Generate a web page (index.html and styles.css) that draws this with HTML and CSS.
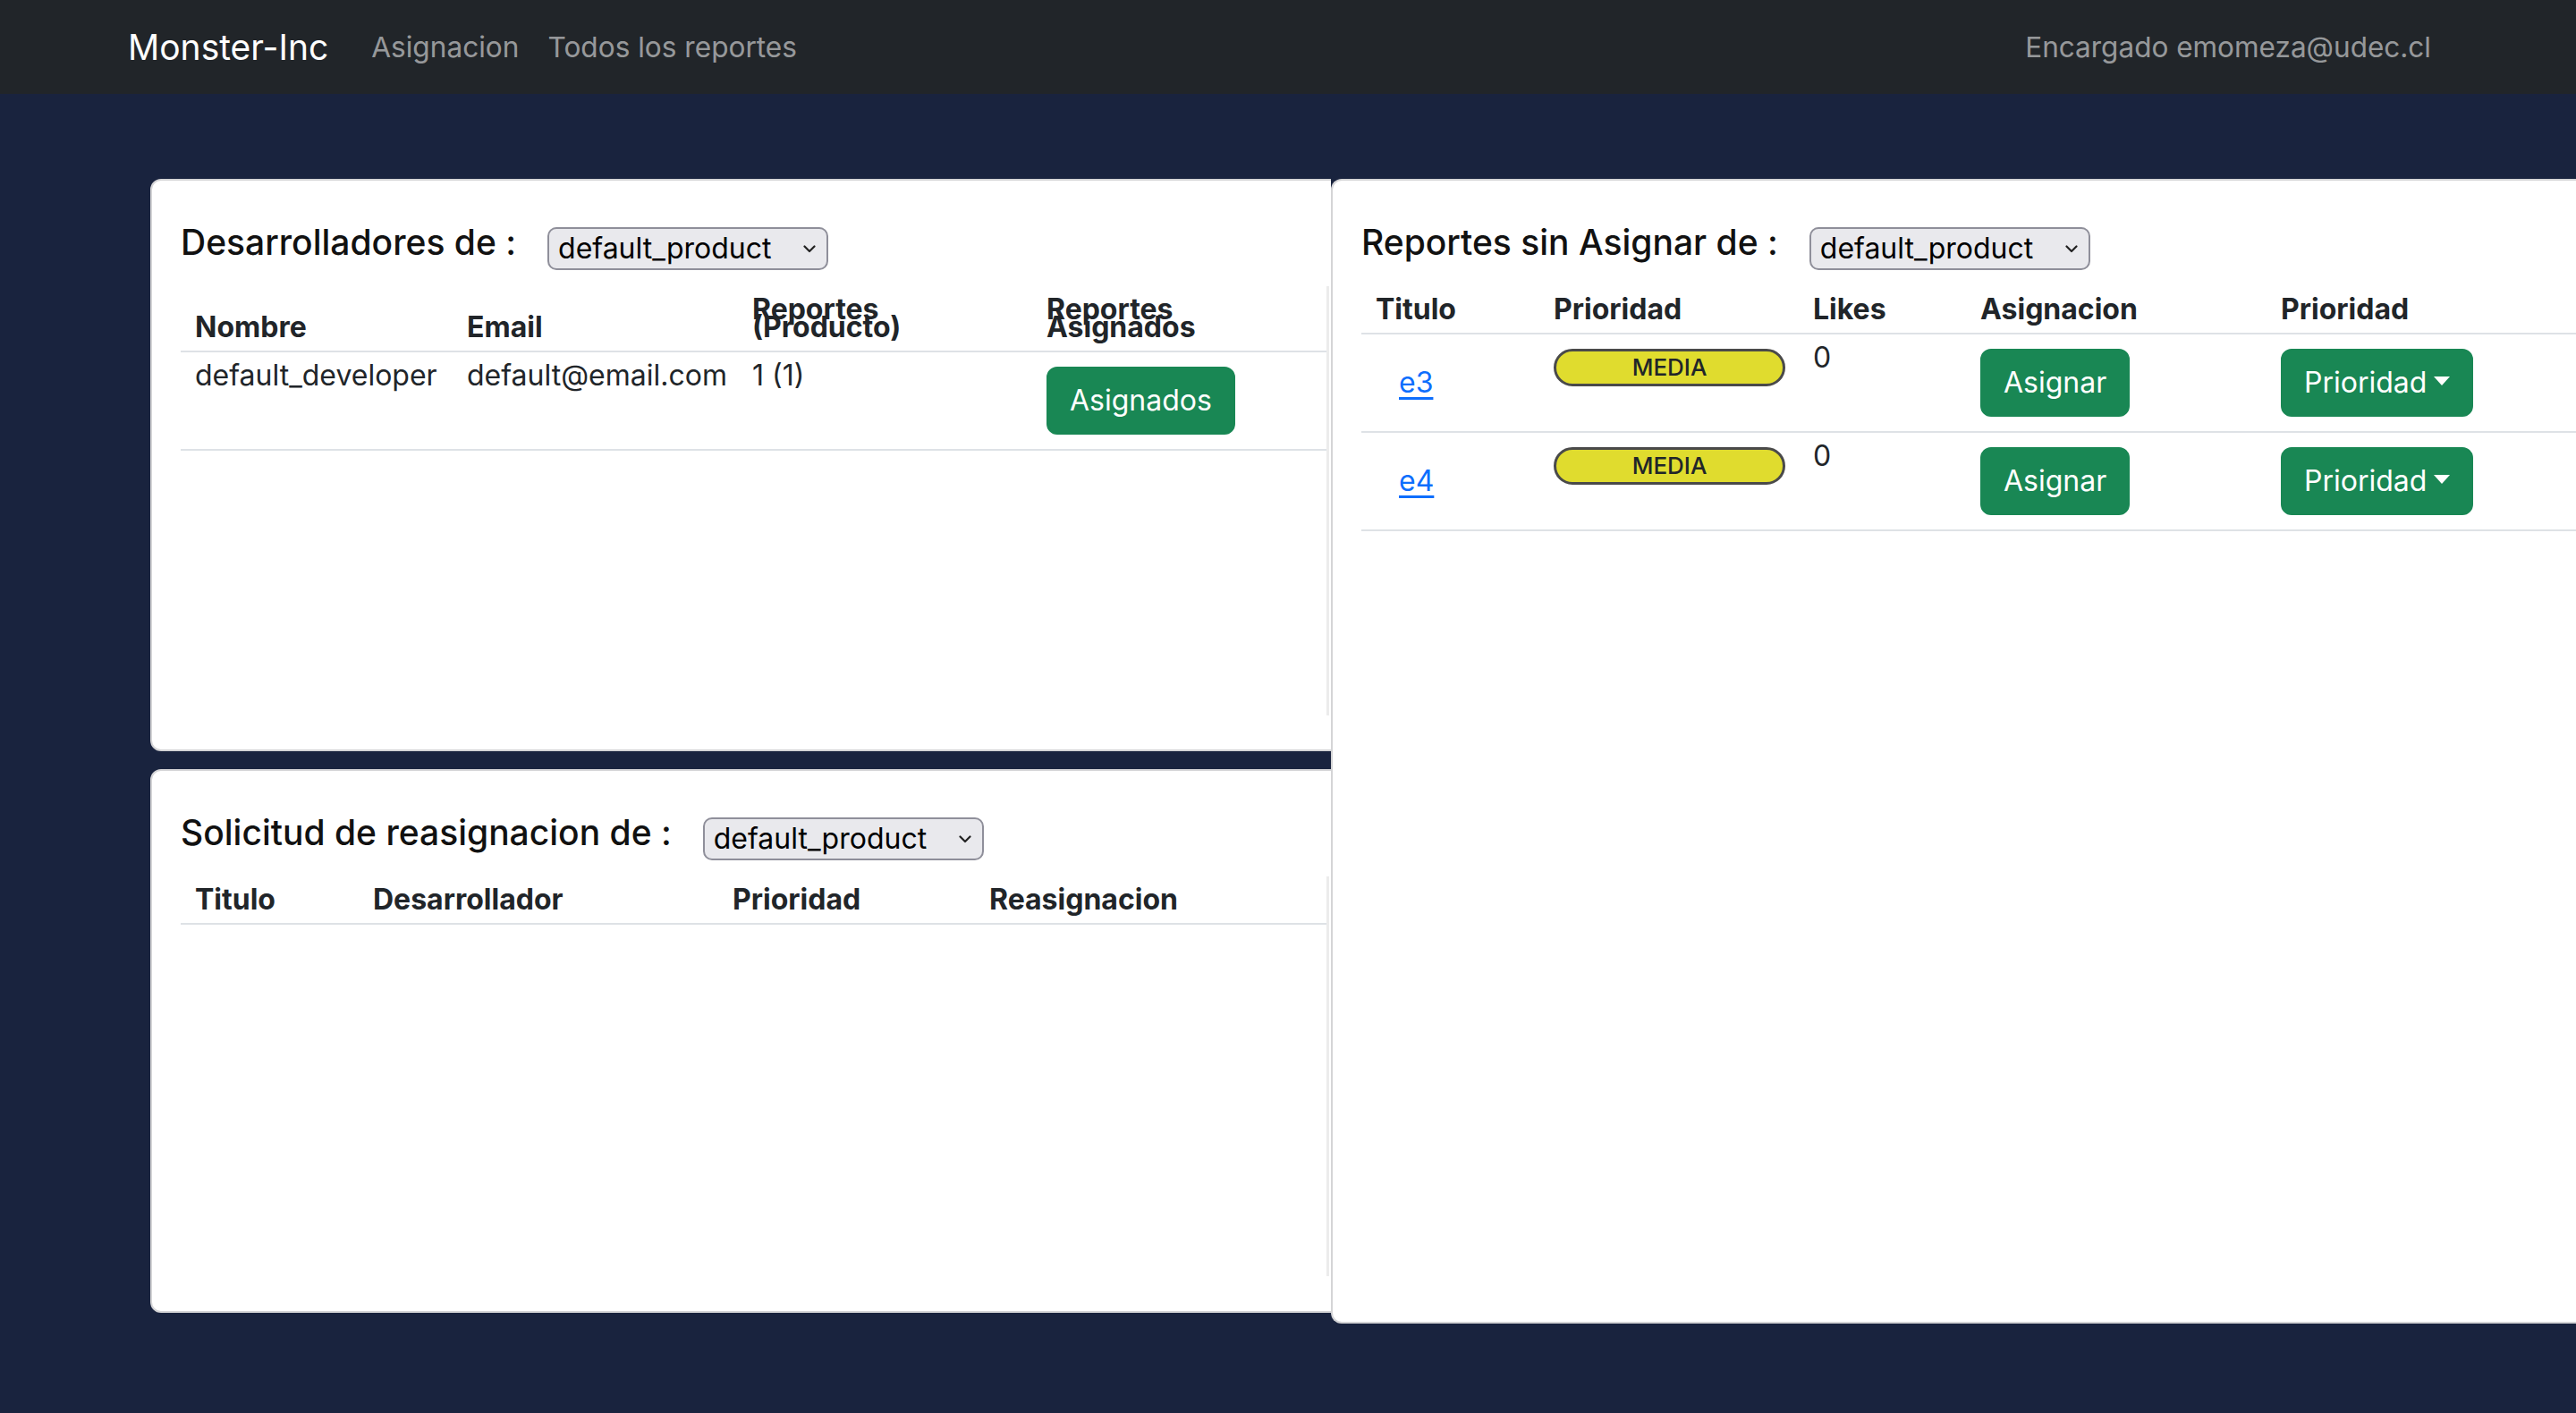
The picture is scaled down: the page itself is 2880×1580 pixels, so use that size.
FILE: index.html
```html
<!DOCTYPE html>
<html lang="es">
<head>
<meta charset="utf-8">
<title>Monster-Inc</title>
<link rel="stylesheet" href="styles.css">
</head>
<body>
<nav class="navbar">
  <div class="nav-left">
    <a class="brand">Monster-Inc</a>
    <a class="nav-link">Asignacion</a>
    <a class="nav-link">Todos los reportes</a>
  </div>
  <span class="nav-user">Encargado emomeza@udec.cl</span>
</nav>

<main class="main">
  <div class="left-col">
    <section class="card card-left card-dev">
      <div class="card-head">
        <h5 class="card-title">Desarrolladores de :</h5>
        <div class="select"><span>default_product</span><svg class="chev" width="14" height="9" viewBox="0 0 14 9"><path d="M1.5 1.5 L7 7 L12.5 1.5" fill="none" stroke="#222" stroke-width="2.2" stroke-linecap="round" stroke-linejoin="round"/></svg></div>
      </div>
      <div class="table-wrap wrap-dev">
        <table class="table">
          <thead>
            <tr>
              <th class="c-304">Nombre</th>
              <th class="c-319">Email</th>
              <th class="c-329">Reportes (Producto)</th>
              <th>Reportes Asignados</th>
            </tr>
          </thead>
          <tbody>
            <tr>
              <td>default_developer</td>
              <td>default@email.com</td>
              <td>1 (1)</td>
              <td><button class="btn">Asignados</button></td>
            </tr>
          </tbody>
        </table>
      </div>
    </section>

    <section class="card card-left card-req">
      <div class="card-head">
        <h5 class="card-title">Solicitud de reasignacion de :</h5>
        <div class="select"><span>default_product</span><svg class="chev" width="14" height="9" viewBox="0 0 14 9"><path d="M1.5 1.5 L7 7 L12.5 1.5" fill="none" stroke="#222" stroke-width="2.2" stroke-linecap="round" stroke-linejoin="round"/></svg></div>
      </div>
      <div class="table-wrap wrap-req">
        <table class="table">
          <thead>
            <tr>
              <th class="c-199">Titulo</th>
              <th class="c-402">Desarrollador</th>
              <th class="c-287">Prioridad</th>
              <th>Reasignacion</th>
            </tr>
          </thead>
        </table>
      </div>
    </section>
  </div>

  <section class="card card-right">
    <div class="card-head">
      <h5 class="card-title">Reportes sin Asignar de :</h5>
      <div class="select"><span>default_product</span><svg class="chev" width="14" height="9" viewBox="0 0 14 9"><path d="M1.5 1.5 L7 7 L12.5 1.5" fill="none" stroke="#222" stroke-width="2.2" stroke-linecap="round" stroke-linejoin="round"/></svg></div>
    </div>
    <table class="table table-right">
      <thead>
        <tr>
          <th class="c-199">Titulo</th>
          <th class="c-290">Prioridad</th>
          <th class="c-187">Likes</th>
          <th class="c-336">Asignacion</th>
          <th>Prioridad</th>
        </tr>
      </thead>
      <tbody>
        <tr>
          <td><button class="btn-link">e3</button></td>
          <td><span class="badge">MEDIA</span></td>
          <td>0</td>
          <td><button class="btn">Asignar</button></td>
          <td><button class="btn">Prioridad<span class="caret"></span></button></td>
        </tr>
        <tr>
          <td><button class="btn-link">e4</button></td>
          <td><span class="badge">MEDIA</span></td>
          <td>0</td>
          <td><button class="btn">Asignar</button></td>
          <td><button class="btn">Prioridad<span class="caret"></span></button></td>
        </tr>
      </tbody>
    </table>
  </section>
</main>
</body>
</html>
```

FILE: styles.css
```css
* { box-sizing: border-box; }

html, body {
  margin: 0;
  padding: 0;
}

body {
  width: 2880px;
  height: 1580px;
  overflow: hidden;
  background: #19233e;
  font-family: Inter, "Noto Sans", sans-serif;
  font-size: 32px;
  color: #212529;
}

/* ---------- navbar ---------- */
.navbar {
  height: 105px;
  background: #212529;
  display: flex;
  align-items: center;
  justify-content: space-between;
  padding: 0 162px 0 143px;
}

.nav-left {
  display: flex;
  align-items: center;
}

.brand {
  font-size: 39px;
  color: #fff;
  margin-right: 32px;
  line-height: 60px;
}

.nav-link {
  padding: 0 16px;
  font-size: 31.6px;
  color: rgba(255, 255, 255, 0.55);
  line-height: 48px;
}

.nav-user {
  font-size: 31.5px;
  color: rgba(255, 255, 255, 0.55);
  line-height: 48px;
}

/* ---------- layout ---------- */
.main {
  display: flex;
  align-items: flex-start;
  padding: 95px 0 0 168px;
}

.left-col {
  flex: none;
  width: 1320px;
  overflow: hidden;
  display: flex;
  flex-direction: column;
  gap: 20px;
}

.card {
  background: #fff;
  border: 2px solid #d4d4d6;
  border-radius: 12px;
}

.card-left {
  width: 1352px;
  padding: 44px 32px 32px 32px;
}

.card-dev { height: 640px; }
.card-req { height: 608px; }

.card-right {
  flex: 1;
  height: 1280px;
  border-right: none;
  border-radius: 12px 0 0 12px;
  padding: 44px 0 32px 32px;
  overflow: hidden;
}

.card-head {
  display: flex;
  align-items: center;
  gap: 35px;
  height: 64px;
  margin-bottom: 10px;
}

.card-title {
  margin: 0 0 14px 0;
  font-size: 39px;
  font-weight: 500;
  line-height: 48px;
  color: #111;
}

.select {
  width: 314px;
  height: 48px;
  border: 2px solid #8f8f9a;
  border-radius: 10px;
  background: #e9e9ed;
  display: flex;
  align-items: center;
  justify-content: space-between;
  padding: 0 12px 0 10px;
  font-size: 32px;
  color: #000;
  line-height: 44px;
}

.chev { flex: none; }

/* ---------- tables ---------- */
.table-wrap {
  border-right: 3px solid #ececec;
}

.wrap-dev { height: 480px; }
.wrap-req { height: 447px; }

.table {
  width: 100%;
  table-layout: fixed;
  border-collapse: collapse;
  font-size: 32px;
  line-height: 20px;
}

.table th {
  text-align: left;
  font-weight: 700;
  vertical-align: bottom;
  padding: 16px;
  border-bottom: 2px solid #dee2e6;
  color: #212529;
}

.table td {
  vertical-align: top;
  padding: 16px;
  border-bottom: 2px solid #dee2e6;
  color: #212529;
}

.c-304 { width: 304px; }
.c-319 { width: 319px; }
.c-329 { width: 329px; }
.c-199 { width: 199px; }
.c-402 { width: 402px; }
.c-287 { width: 287px; }
.c-290 { width: 290px; }
.c-187 { width: 187px; }
.c-336 { width: 336px; }

/* ---------- controls ---------- */
.btn {
  display: inline-block;
  vertical-align: top;
  font-family: Inter, "Noto Sans", sans-serif;
  font-size: 32px;
  line-height: 48px;
  padding: 12px 24px;
  border: 2px solid #198754;
  border-radius: 12px;
  background: #198754;
  color: #fff;
  white-space: nowrap;
}

.caret {
  display: inline-block;
  margin-left: 8px;
  vertical-align: 8px;
  border-top: 10px solid #fff;
  border-left: 9px solid transparent;
  border-right: 9px solid transparent;
}

.btn-link {
  display: inline-block;
  vertical-align: top;
  font-family: Inter, "Noto Sans", sans-serif;
  font-size: 32px;
  line-height: 48px;
  padding: 12px 24px;
  border: 2px solid transparent;
  background: transparent;
  color: #0d6efd;
  text-decoration: underline;
  text-underline-offset: 5px;
  text-decoration-thickness: 3px;
}

.badge {
  display: inline-block;
  vertical-align: top;
  width: 259px;
  height: 42px;
  border: 3px solid #4a4a4a;
  border-radius: 21px;
  background: #e0dc2e;
  text-align: center;
  font-size: 26px;
  font-weight: 500;
  line-height: 36px;
  color: #212529;
}
```
